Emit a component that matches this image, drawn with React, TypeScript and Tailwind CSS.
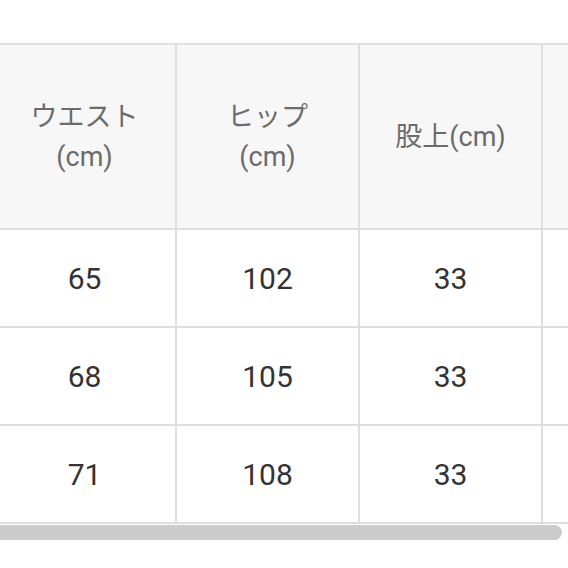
import React from "react";

const font = { fontFamily: 'Roboto, "Noto Sans CJK JP", sans-serif' };

const headers: string[][] = [["ウエスト", "(cm)"], ["ヒップ", "(cm)"], ["股上(cm)"], [""]];
const rows: string[][] = [
  ["65", "102", "33", ""],
  ["68", "105", "33", ""],
  ["71", "108", "33", ""],
];

export default function App() {
  return (
    <div className="w-[568px] h-[568px] bg-white pt-[43px] overflow-hidden" style={font}>
      <div className="overflow-hidden w-[568px]">
        <div className="-ml-[6px] w-[800px] border-t-2 border-[#e0e0e0]">
          <div className="flex">
            {headers.map((h, i) => (
              <div
                key={i}
                className="w-[183px] shrink-0 h-[185px] border-r-2 border-b-2 border-[#dedede] bg-[#f7f7f7] flex flex-col items-center justify-center text-[27px] leading-[40px] text-[#6b6b6b]"
              >
                {h.map((t, j) => (
                  <span key={j}>{t}</span>
                ))}
              </div>
            ))}
          </div>
          {rows.map((r, i) => (
            <div key={i} className="flex">
              {r.map((c, j) => (
                <div
                  key={j}
                  className="w-[183px] shrink-0 h-[98px] border-r-2 border-b-2 border-[#dedede] bg-white flex items-center justify-center text-[30px] text-[#333333]"
                >
                  {c}
                </div>
              ))}
            </div>
          ))}
        </div>
      </div>
      <div className="mt-[1px] w-[562px] h-[15px] bg-[#cccccc] rounded-r-full" />
    </div>
  );
}
